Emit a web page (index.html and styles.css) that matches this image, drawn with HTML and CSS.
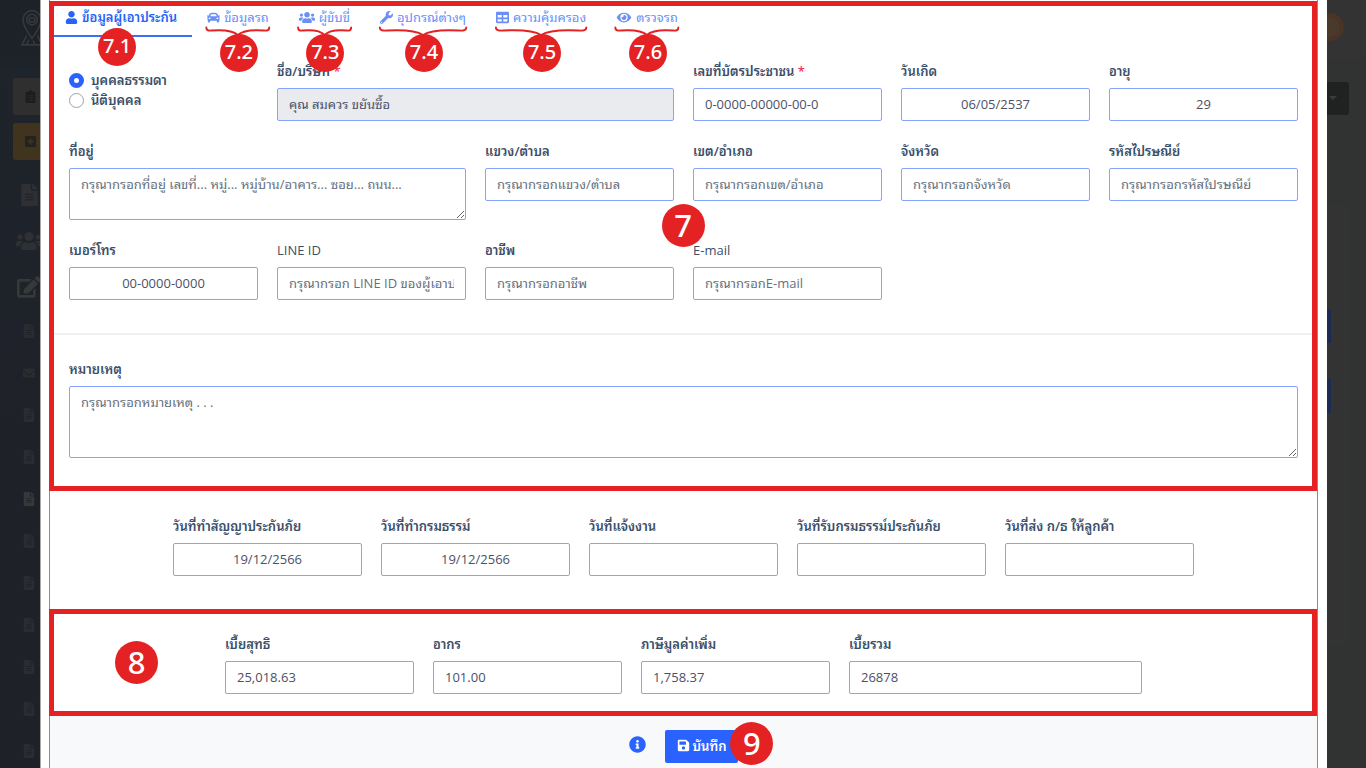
FILE: index.html
```html
<!DOCTYPE html>
<html lang="th">
<head>
<meta charset="utf-8">
<title>ข้อมูลผู้เอาประกัน</title>
<link rel="stylesheet" href="styles.css">
</head>
<body>
<svg class="sprite" aria-hidden="true">
  <symbol id="user" viewBox="0 0 448 512"><path d="M224 256c70.7 0 128-57.3 128-128S294.7 0 224 0 96 57.3 96 128s57.3 128 128 128zm89.6 32h-16.7c-22.2 10.2-46.9 16-72.9 16s-50.6-5.8-72.9-16h-16.7C60.2 288 0 348.2 0 422.4V464c0 26.5 21.5 48 48 48h352c26.5 0 48-21.5 48-48v-41.6c0-74.2-60.2-134.4-134.4-134.4z"/></symbol>
  <symbol id="car" viewBox="0 0 512 512"><path d="M499.99 176h-59.87l-16.64-41.6C406.38 91.63 365.57 64 319.5 64h-127c-46.06 0-86.88 27.63-103.99 70.4L71.87 176H12.01C4.2 176-1.53 183.34.37 190.91l6 24C7.7 220.25 12.5 224 18.01 224h20.07C24.65 235.73 16 252.78 16 272v48c0 16.12 6.16 30.67 16 41.93V416c0 17.67 14.33 32 32 32h32c17.67 0 32-14.33 32-32v-32h256v32c0 17.67 14.33 32 32 32h32c17.67 0 32-14.33 32-32v-54.07c9.84-11.25 16-25.8 16-41.93v-48c0-19.22-8.65-36.27-22.07-48H494c5.51 0 10.31-3.75 11.64-9.09l6-24c1.89-7.57-3.84-14.91-11.65-14.91zm-352.06-17.83c7.29-18.22 24.94-30.17 44.57-30.17h127c19.63 0 37.28 11.95 44.57 30.17L384 208H128l19.93-49.83zM96 319.8c-19.2 0-32-12.76-32-31.9S76.8 256 96 256s48 28.71 48 47.85-28.8 15.95-48 15.95zm320 0c-19.2 0-48 3.19-48-15.95S396.8 256 416 256s32 12.76 32 31.9-12.8 31.9-32 31.9z"/></symbol>
  <symbol id="users" viewBox="0 0 640 512"><path d="M96 224c35.3 0 64-28.7 64-64s-28.7-64-64-64-64 28.7-64 64 28.7 64 64 64zm448 0c35.3 0 64-28.7 64-64s-28.7-64-64-64-64 28.7-64 64 28.7 64 64 64zm32 32h-64c-17.6 0-33.5 7.1-45.1 18.6 40.3 22.1 68.9 62 75.1 109.4h66c17.7 0 32-14.3 32-32v-32c0-35.3-28.7-64-64-64zm-256 0c61.9 0 112-50.1 112-112S381.9 32 320 32 208 82.1 208 144s50.1 112 112 112zm76.8 32h-8.3c-20.8 10-43.9 16-68.5 16s-47.6-6-68.5-16h-8.3C179.6 288 128 339.6 128 403.2V432c0 26.5 21.5 48 48 48h288c26.5 0 48-21.5 48-48v-28.8c0-63.6-51.6-115.2-115.2-115.2zm-223.7-13.4C161.5 263.1 145.6 256 128 256H64c-35.3 0-64 28.7-64 64v32c0 17.7 14.3 32 32 32h65.9c6.3-47.4 34.9-87.3 75.2-109.4z"/></symbol>
  <symbol id="wrench" viewBox="0 0 512 512"><path d="M507.73 109.1c-2.24-9.03-13.54-12.09-20.12-5.51l-74.36 74.36-67.88-11.31-11.31-67.88 74.36-74.36c6.62-6.62 3.43-17.9-5.66-20.16-47.38-11.74-99.55.91-136.58 37.93-39.64 39.64-50.55 97.1-34.05 147.2L18.74 402.76c-24.99 24.99-24.99 65.51 0 90.5 24.99 24.99 65.51 24.99 90.5 0l213.21-213.21c50.12 16.71 107.47 5.68 147.37-34.22 37.07-37.07 49.7-89.32 37.91-136.73zM64 472c-13.25 0-24-10.75-24-24 0-13.26 10.75-24 24-24s24 10.74 24 24c0 13.25-10.75 24-24 24z"/></symbol>
  <symbol id="table" viewBox="0 0 512 512"><path d="M464 32H48C21.49 32 0 53.49 0 80v352c0 26.51 21.49 48 48 48h416c26.51 0 48-21.49 48-48V80c0-26.51-21.49-48-48-48zM224 416H64v-96h160v96zm0-160H64v-96h160v96zm224 160H288v-96h160v96zm0-160H288v-96h160v96z"/></symbol>
  <symbol id="eye" viewBox="0 0 576 512"><path d="M572.52 241.4C518.29 135.59 410.93 64 288 64S57.68 135.64 3.48 241.41a32.35 32.35 0 0 0 0 29.19C57.71 376.41 165.07 448 288 448s230.32-71.64 284.52-177.41a32.35 32.35 0 0 0 0-29.19zM288 400a144 144 0 1 1 144-144 143.93 143.93 0 0 1-144 144zm0-240a95.31 95.31 0 0 0-25.31 3.79 47.85 47.85 0 0 1-66.9 66.9A95.78 95.78 0 1 0 288 160z"/></symbol>
  <symbol id="save" viewBox="0 0 448 512"><path d="M433.941 129.941l-83.882-83.882A48 48 0 0 0 316.118 32H48C21.49 32 0 53.49 0 80v352c0 26.51 21.49 48 48 48h352c26.51 0 48-21.49 48-48V163.882a48 48 0 0 0-14.059-33.941zM224 416c-35.346 0-64-28.654-64-64 0-35.346 28.654-64 64-64s64 28.654 64 64c0 35.346-28.654 64-64 64zm96-304.52V212c0 6.627-5.373 12-12 12H76c-6.627 0-12-5.373-12-12V108c0-6.627 5.373-12 12-12h228.52c3.183 0 6.235 1.264 8.485 3.515l3.48 3.48A11.996 11.996 0 0 1 320 111.48z"/></symbol>
  <symbol id="info" viewBox="0 0 512 512"><path d="M256 8C119.043 8 8 119.083 8 256c0 136.997 111.043 248 248 248s248-111.003 248-248C504 119.083 392.957 8 256 8zm0 110c23.196 0 42 18.804 42 42s-18.804 42-42 42-42-18.804-42-42 18.804-42 42-42zm56 254c0 6.627-5.373 12-12 12h-88c-6.627 0-12-5.373-12-12v-24c0-6.627 5.373-12 12-12h12v-64h-12c-6.627 0-12-5.373-12-12v-24c0-6.627 5.373-12 12-12h64c6.627 0 12 5.373 12 12v100h12c6.627 0 12 5.373 12 12v24z"/></symbol>
  <symbol id="file" viewBox="0 0 384 512"><path d="M224 136V0H24C10.7 0 0 10.7 0 24v464c0 13.3 10.7 24 24 24h336c13.3 0 24-10.7 24-24V160H248c-13.2 0-24-10.8-24-24zm64 236c0 6.6-5.4 12-12 12H108c-6.6 0-12-5.4-12-12v-8c0-6.6 5.4-12 12-12h168c6.6 0 12 5.4 12 12v8zm0-64c0 6.6-5.4 12-12 12H108c-6.6 0-12-5.4-12-12v-8c0-6.6 5.4-12 12-12h168c6.6 0 12 5.4 12 12v8zm0-72v8c0 6.6-5.4 12-12 12H108c-6.6 0-12-5.4-12-12v-8c0-6.6 5.4-12 12-12h168c6.6 0 12 5.4 12 12zm96-114.1v6.1H256V0h6.1c6.4 0 12.5 2.5 17 7l97.9 98c4.5 4.5 7 10.6 7 16.9z"/></symbol>
  <symbol id="mail" viewBox="0 0 512 512"><path d="M502.3 190.8c3.9-3.1 9.7-.2 9.7 4.7V400c0 26.5-21.5 48-48 48H48c-26.5 0-48-21.5-48-48V195.6c0-5 5.7-7.8 9.7-4.7 22.4 17.4 52.1 39.5 154.1 113.6 21.1 15.4 56.7 47.8 92.2 47.6 35.7.3 72-32.8 92.3-47.6 102-74.1 131.6-96.3 154-113.7zM256 320c23.2.4 56.6-29.2 73.4-41.4 132.7-96.3 142.8-104.7 173.4-128.7 5.8-4.5 9.2-11.5 9.2-18.9v-19c0-26.5-21.5-48-48-48H48c-26.5 0-48 21.5-48 48v19c0 7.4 3.4 14.3 9.2 18.9 30.6 23.9 40.7 32.4 173.4 128.7 16.8 12.2 50.2 41.8 73.4 41.4z"/></symbol>
  <symbol id="edit" viewBox="0 0 576 512"><path d="M402.6 83.2l90.2 90.2c3.8 3.8 3.8 10 0 13.8L274.4 405.6l-92.8 10.3c-12.4 1.4-22.9-9.1-21.5-21.5l10.3-92.8L388.8 83.2c3.8-3.8 10-3.8 13.8 0zm162-22.9l-48.8-48.8c-15.2-15.2-39.9-15.2-55.2 0l-35.4 35.4c-3.8 3.8-3.8 10 0 13.8l90.2 90.2c3.8 3.8 10 3.8 13.8 0l35.4-35.4c15.2-15.3 15.2-40 0-55.2zM384 346.2V448H64V128h229.8c3.2 0 6.2-1.3 8.5-3.5l40-40c7.6-7.6 2.2-20.5-8.5-20.5H48C21.5 64 0 85.5 0 112v352c0 26.5 21.5 48 48 48h352c26.5 0 48-21.5 48-48V306.2c0-10.7-12.9-16-20.5-8.5l-40 40c-2.2 2.3-3.5 5.3-3.5 8.5z"/></symbol>
  <symbol id="clipboard" viewBox="0 0 384 512"><path fill-rule="evenodd" d="M48 64h80a64 64 0 0 1 128 0h80q48 0 48 48v352q0 48-48 48H48q-48 0-48-48V112q0-48 48-48zm32 150v36h40v-36zm72 0v36h152v-36zm-72 84v36h40v-36zm72 0v36h152v-36zm-72 84v36h40v-36zm72 0v36h152v-36z"/></symbol>
  <symbol id="plus" viewBox="0 0 448 512"><path fill-rule="evenodd" d="M48 32h352q48 0 48 48v352q0 48-48 48H48q-48 0-48-48V80q0-48 48-48zm140 100v88h-88v72h88v88h72v-88h88v-72h-88v-88z"/></symbol>
  <symbol id="pin" viewBox="0 0 40 72"><g fill="none" stroke="currentColor" stroke-width="3"><path d="M20 56C12 44 3 34 3 20a17 17 0 0 1 34 0c0 14-9 24-17 36z"/><circle cx="20" cy="20" r="10"/><path d="M10 50L1 68h38l-9-18M10 68l4-10M26 68l-4-8"/><path d="M15 17h10v7H15z"/></g></symbol>
  <symbol id="brace" viewBox="0 0 100 16" preserveAspectRatio="none"><path d="M2 2Q2 7 10 6Q40 4 50 12Q60 4 90 6Q98 7 98 2" fill="none" stroke="#e42224" stroke-width="2" stroke-linecap="round" vector-effect="non-scaling-stroke"/></symbol>
</svg>
<div class="app">
  <aside class="rail">
    <div class="brand"><svg><use href="#pin"/></svg></div>
    <div class="quick">
      <button class="quick-btn" type="button" aria-label="รายการ"><svg><use href="#clipboard"/></svg></button>
      <button class="quick-btn add" type="button" aria-label="เพิ่ม"><svg><use href="#plus"/></svg></button>
    </div>
    <div class="menu">
      <svg><use href="#file"/></svg>
      <svg class="wide"><use href="#users"/></svg>
      <svg class="pen bright"><use href="#edit"/></svg>
    </div>
    <div class="submenu">
      <svg><use href="#file"/></svg><svg><use href="#mail"/></svg><svg><use href="#file"/></svg><svg><use href="#file"/></svg><svg class="bright"><use href="#file"/></svg><svg><use href="#file"/></svg><svg><use href="#file"/></svg><svg><use href="#file"/></svg><svg><use href="#file"/></svg><svg><use href="#file"/></svg><svg><use href="#file"/></svg>
    </div>
  </aside>

  <main class="modal">
    <form class="sheet">
      <section class="part insured marked">
        <nav class="tabs">
          <a class="tab active" href="#"><svg class="ic"><use href="#user"/></svg><span>ข้อมูลผู้เอาประกัน</span><b class="badge">7.1</b></a>
          <a class="tab" href="#"><svg class="ic"><use href="#car"/></svg><span>ข้อมูลรถ</span><svg class="brace"><use href="#brace"/></svg><b class="badge">7.2</b></a>
          <a class="tab" href="#"><svg class="ic ic-wide"><use href="#users"/></svg><span>ผู้ขับขี่</span><svg class="brace"><use href="#brace"/></svg><b class="badge">7.3</b></a>
          <a class="tab" href="#"><svg class="ic"><use href="#wrench"/></svg><span>อุปกรณ์ต่างๆ</span><svg class="brace"><use href="#brace"/></svg><b class="badge">7.4</b></a>
          <a class="tab" href="#"><svg class="ic"><use href="#table"/></svg><span>ความคุ้มครอง</span><svg class="brace"><use href="#brace"/></svg><b class="badge">7.5</b></a>
          <a class="tab" href="#"><svg class="ic ic-wide"><use href="#eye"/></svg><span>ตรวจรถ</span><svg class="brace"><use href="#brace"/></svg><b class="badge">7.6</b></a>
        </nav>
        <div class="grid">
          <div class="kinds">
            <label><input type="radio" name="kind" checked>บุคคลธรรมดา</label>
            <label><input type="radio" name="kind">นิติบุคคล</label>
          </div>
          <div class="field w8"><label for="name">ชื่อ/บริษัท <i>*</i></label><input id="name" value="คุณ สมควร ขยันซื้อ" readonly></div>
          <div class="field"><label for="idcard">เลขที่บัตรประชาชน <i>*</i></label><input id="idcard" value="0-0000-00000-00-0"></div>
          <div class="field mid"><label for="birth">วันเกิด</label><input id="birth" value="06/05/2537"></div>
          <div class="field mid"><label for="age">อายุ</label><input id="age" value="29"></div>

          <div class="field w8"><label for="addr">ที่อยู่</label><textarea id="addr" class="short" placeholder="กรุณากรอกที่อยู่ เลขที่... หมู่... หมู่บ้าน/อาคาร... ซอย... ถนน..."></textarea></div>
          <div class="field"><label for="sub">แขวง/ตำบล</label><input id="sub" placeholder="กรุณากรอกแขวง/ตำบล"></div>
          <div class="field"><label for="dist">เขต/อำเภอ</label><input id="dist" placeholder="กรุณากรอกเขต/อำเภอ"></div>
          <div class="field"><label for="prov">จังหวัด</label><input id="prov" placeholder="กรุณากรอกจังหวัด"></div>
          <div class="field"><label for="zip">รหัสไปรษณีย์</label><input id="zip" placeholder="กรุณากรอกรหัสไปรษณีย์"></div>

          <div class="field mid"><label for="tel">เบอร์โทร</label><input id="tel" value="00-0000-0000"></div>
          <div class="field latin"><label for="line">LINE ID</label><input id="line" placeholder="กรุณากรอก LINE ID ของผู้เอาประกัน"></div>
          <div class="field"><label for="job">อาชีพ</label><input id="job" placeholder="กรุณากรอกอาชีพ"></div>
          <div class="field latin"><label for="mail-in">E-mail</label><input id="mail-in" placeholder="กรุณากรอกE-mail"></div>
        </div>
        <b class="badge big center-mark">7</b>
        <hr>
        <div class="field note"><label for="note">หมายเหตุ</label><textarea id="note" class="tall" placeholder="กรุณากรอกหมายเหตุ . . ."></textarea></div>
      </section>

      <section class="part dates">
        <div class="grid">
          <div class="field mid from3"><label for="d1">วันที่ทำสัญญาประกันภัย</label><input id="d1" value="19/12/2566"></div>
          <div class="field mid"><label for="d2">วันที่ทำกรมธรรม์</label><input id="d2" value="19/12/2566"></div>
          <div class="field mid"><label for="d3">วันที่แจ้งงาน</label><input id="d3"></div>
          <div class="field mid"><label for="d4">วันที่รับกรมธรรม์ประกันภัย</label><input id="d4"></div>
          <div class="field mid"><label for="d5">วันที่ส่ง ก/ธ ให้ลูกค้า</label><input id="d5"></div>
        </div>
      </section>

      <section class="part premium marked">
        <div class="grid">
          <b class="badge big inline-mark">8</b>
          <div class="field from4"><label for="p1">เบี้ยสุทธิ</label><input id="p1" value="25,018.63"></div>
          <div class="field"><label for="p2">อากร</label><input id="p2" value="101.00"></div>
          <div class="field"><label for="p3">ภาษีมูลค่าเพิ่ม</label><input id="p3" value="1,758.37"></div>
          <div class="field w6"><label for="p4">เบี้ยรวม</label><input id="p4" value="26878"></div>
        </div>
      </section>

      <footer class="actions">
        <svg class="info"><use href="#info"/></svg>
        <button class="save" type="submit"><svg class="ic"><use href="#save"/></svg>บันทึก<b class="badge big">9</b></button>
      </footer>
    </form>
  </main>

  <div class="backdrop">
    <div class="top"><span class="avatar"></span></div>
    <div class="drop"></div>
    <div class="panel"><span></span><span></span></div>
  </div>
</div>
</body>
</html>
```
FILE: styles.css
```css
* { box-sizing: border-box; }
body {
  margin: 0;
  font-family: "Open Sans", "Noto Sans Thai Looped", Loma, Waree, "Noto Sans", sans-serif;
  font-size: 13px;
  line-height: 20px;
  color: #4c5068;
}
svg { fill: currentColor; }
.sprite { position: absolute; width: 0; height: 0; }
.app {
  display: grid;
  grid-template-columns: 40px 1fr 39px;
  height: 100vh;
  overflow: hidden;
  background: #303332;
}

/* dimmed sidebar */
.rail {
  overflow: hidden;
  background: linear-gradient(#1d2229 0, #1d2229 62px, #1e242b 67px, #1f2129 420px);
  color: #2e3033;
}
.brand { height: 66px; padding: 9px 0 0 21px; color: #36383a; }
.brand svg { width: 22px; height: 38px; }
.quick { display: grid; gap: 8px; margin-top: 12px; }
.quick-btn {
  width: 180px; height: 37px; margin-left: 13px; padding: 0 12px;
  display: flex; align-items: center;
  border: 0; border-radius: 3px; background: #2f2f2f; color: #1b1d1e;
}
.quick-btn svg { width: 11px; height: 13px; }
.quick-btn.add { background: #40341f; color: #232222; }
.menu { margin-top: 12px; }
.menu svg { display: block; width: 17px; height: 46px; margin-left: 21px; padding: 12px 0; }
.menu svg.wide { width: 26px; margin-left: 16px; padding: 11px 0; }
.menu svg.pen { width: 24px; margin-left: 17px; }
.menu svg.bright, .submenu svg.bright { color: #37383a; }
.submenu { color: #2a2c30; }
.submenu svg { display: block; width: 12px; height: 42px; margin-left: 23px; padding: 14px 0; }

/* dimmed page on the right */
.backdrop { overflow: hidden; background: #303332; }
.top { height: 57px; padding-top: 13px; background: #333; border-bottom: 1px solid #363333; }
.avatar { display: block; width: 28px; height: 28px; margin-left: -11px; border-radius: 50%; background: #493a2c; border: 4px solid #4b3326; }
.drop { width: 22px; height: 33px; margin-top: 25px; border-radius: 0 3px 3px 0; background: #202221; padding: 14px 0 0 2px; }
.drop::before { content: ""; display: block; width: 0; border: 4px solid transparent; border-top-color: #3a3c3b; }
.panel { width: 22px; height: 440px; margin-top: 90px; padding-top: 104px; background: #333; }
.panel span { display: block; width: 4px; height: 34px; margin-bottom: 36px; background: #1d2a51; }

/* modal */
.modal { min-width: 0; background: #fff; border-left: 1px solid #aaa; padding: 0 9px 0 8px; }
.sheet { display: flex; flex-direction: column; min-height: 100vh; border: solid #6e90c4; border-width: 0 1px; }
.part { position: relative; padding: 26px 19px; }
.marked::after {
  content: ""; position: absolute; inset: 0 0 0 -1px;
  border: 5px solid #e42224; pointer-events: none;
}
.insured { padding: 0 19px 33px; }
.insured.marked::after { top: 1px; }
.dates { padding-bottom: 33px; }
.premium { padding-bottom: 22px; }

.tabs { display: flex; height: 37px; margin: 0 -19px 25px; }
.tab {
  position: relative; display: flex; align-items: center; gap: 4px;
  padding: 0 15px 3px; color: #6a90f8; font-size: 13px; text-decoration: none;
}
.tab.active { padding-bottom: 1px; color: #2962f6; font-weight: 600; border-bottom: 2px solid #3a70f2; }
.ic { width: 13px; height: 13px; flex: none; }
.ic-wide { width: 16px; }
.brace { position: absolute; left: 13px; top: 26px; width: calc(100% - 26px); height: 12px; }
.badge {
  position: absolute; z-index: 1; left: calc(50% - 18px); top: 34px;
  width: 38px; height: 38px; border-radius: 50%;
  background: #e42224; color: #fff; text-align: center;
  font-size: 20px; line-height: 36px; font-weight: 500;
  font-family: "Noto Sans", sans-serif;
}
.active .badge { left: calc(50% - 23px); top: 28px; }
.badge.big { width: 43px; height: 43px; font-size: 31px; line-height: 42px; }
.center-mark { left: calc(50% - 22px); top: 204px; }
.inline-mark { left: 65px; top: 32px; }
.save .badge { left: calc(100% - 8px); top: -8px; }

.grid { display: grid; grid-template-columns: repeat(24, 1fr); gap: 21px 19px; }
.field { grid-column: span 4; min-width: 0; display: flex; flex-direction: column; gap: 6px; }
.w8 { grid-column: span 8; }
.w6 { grid-column: span 6; }
.from3 { grid-column: 3 / span 4; }
.from4 { grid-column: 4 / span 4; }
.field label, .kinds label { color: #3b4f69; font-weight: 600; white-space: nowrap; }
.field label { height: 20px; line-height: 18px; }
.field.latin label { font-weight: 400; }
.field i { color: #f5365c; font-style: normal; }
input, textarea { font: inherit; color: inherit; }
.field input, .field textarea {
  width: 100%; height: 33px; padding: 0 11px 2px;
  border: 1px solid #84a5fa; border-radius: 2px; background: #fff;
}
.field textarea { display: block; padding: 5px 11px; resize: vertical; }
.field .short { height: 52px; }
.field .tall { height: 72px; }
.field input[readonly] { background: #e9ebef; }
.mid input { text-align: center; }
::placeholder { color: #66707c; opacity: 1; }
.kinds { grid-column: span 4; padding-top: 8px; }
.kinds label { display: flex; align-items: center; gap: 7px; }
.kinds input {
  appearance: none; width: 15px; height: 15px; margin: 0;
  border: 1px solid #9aa3b0; border-radius: 50%; background: #fff;
}
.kinds input:checked { border: 5px solid #2962ff; }
hr { height: 2px; margin: 33px -19px 25px; border: 0; background: #f0f1f3; }

.actions {
  flex: 1; display: flex; justify-content: center; align-items: flex-start; gap: 19px;
  padding-top: 14px; background: #f8f9fb;
}
.info { width: 17px; height: 17px; margin-top: 6px; color: #2962ff; }
.save {
  position: relative; display: flex; align-items: center; gap: 3px;
  height: 33px; padding: 0 12px 2px; border: 0; border-radius: 2px;
  background: #2962ff; color: #fff; font: inherit; font-weight: 600;
}
```
